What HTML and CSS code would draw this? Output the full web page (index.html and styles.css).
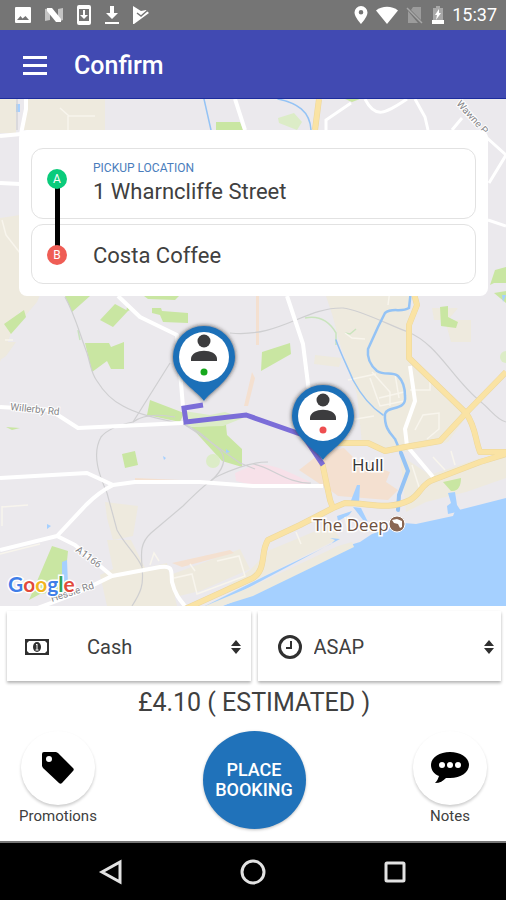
FILE: index.html
```html
<!DOCTYPE html>
<html lang="en">
<head>
<meta charset="utf-8">
<meta name="viewport" content="width=device-width, initial-scale=1">
<title>Confirm</title>
<link rel="stylesheet" href="styles.css">
</head>
<body>
<div class="status-bar">
  <div class="status-group status-notices">
    <svg width="18" height="18" viewBox="0 0 18 18"><path fill="#fff" fill-rule="evenodd" d="M2 1h14a1 1 0 0 1 1 1v14a1 1 0 0 1-1 1H2a1 1 0 0 1-1-1V2a1 1 0 0 1 1-1zm1 13h12l-3.500-4-3 2.500L6.500 10z"/></svg>
    <svg width="20" height="18" viewBox="0 0 20 18"><path fill="#c4c4c4" d="M1 3l5-1v12l-5 1zM14 3l5-1v12l-5 2z"/><path fill="#fff" d="M3 2h5l9 11v3h-5L3 5z"/></svg>
    <svg width="16" height="20" viewBox="0 0 16 20"><path fill="#fff" fill-rule="evenodd" d="M3 0h10a2 2 0 0 1 2 2v16a2 2 0 0 1-2 2H3a2 2 0 0 1-2-2V2a2 2 0 0 1 2-2zm0 4v12h10V4z"/><path fill="#fff" d="M7 5h2v5h3l-4 4-4-4h3z"/></svg>
    <svg width="16" height="20" viewBox="0 0 16 20"><path fill="#fff" d="M6 1h4v7h4l-6 6-6-6h4zM1 17h14v2H1z"/></svg>
    <svg width="18" height="18" viewBox="0 0 18 18"><path fill="#fff" d="M1 0l8 5 5-1 3 3L2 18H1z"/><path d="M5 7l4 3 7-6" fill="none" stroke="#757575" stroke-width="1.500"/></svg>
  </div>
  <div class="status-group status-system">
    <svg width="14" height="20" viewBox="0 0 14 20"><path fill="#fff" fill-rule="evenodd" d="M7 1a6.500 6.500 0 0 0-6.500 6.500C.5 12 7 19 7 19s6.500-7 6.500-11.500A6.500 6.500 0 0 0 7 1zm0 4a2.300 2.300 0 1 1 0 4.600A2.300 2.300 0 0 1 7 5z"/></svg>
    <svg width="22" height="18" viewBox="0 0 22 18"><path fill="#fff" d="M0 4.500C6-.5 16-.5 22 4.500L11 18z"/></svg>
    <svg width="18" height="18" viewBox="0 0 18 18"><path fill="#9c9c9c" d="M7 1h8v13L5 4zM2 5l10 12H2z"/><path d="M1 2l15 15" stroke="#a8a8a8" stroke-width="1.500"/></svg>
    <svg width="12" height="18" viewBox="0 0 12 18"><path fill="#a8a8a8" d="M4 0h4v2h3v12H1V2h3z"/><path fill="#fff" d="M0 14h12v4H0zM7 3L3 9h2l-1 5 5-7H7z"/></svg>
    <span class="clock">15:37</span>
  </div>
</div>

<header class="app-bar">
  <button class="menu-button" type="button" aria-label="Menu"><span></span><span></span><span></span></button>
  <h1>Confirm</h1>
</header>

<main>
  <section class="map">
    <svg class="map-canvas" viewBox="0 99 506 507" preserveAspectRatio="xMidYMid slice" role="img" aria-label="Route map of Hull">
      <defs>
        <filter id="pin-shadow" x="-30%" y="-30%" width="160%" height="160%"><feDropShadow dx="0" dy="0" stdDeviation="2" flood-color="#222" flood-opacity=".85"/></filter>
        <g id="pin">
          <path filter="url(#pin-shadow)" fill="#1b70b8" d="M0 44C-4 36-31 22-31 0a31 31 0 0 1 62 0C31 22 4 36 0 44z"/>
          <circle r="25" fill="#fff"/>
          <circle cy="-16" r="6.500" fill="#3c3c3e"/>
          <path fill="#3c3c3e" d="M-13 4V2c0-11 26-11 26 0v2z"/>
        </g>
      </defs>
      <rect y="99" width="506" height="507" fill="#ebe9ed"/>
      <g fill="#eeeade">
        <path d="M24 99h81v31H24zM0 99h16v34H0zM0 218l20-3v95L0 362zM20 290h22l-5 12-17 20zM0 342h16l-10 14-6 4z"/>
        <path d="M324 290h86l-2 70 34 28 26 26-20 28-42 10-44-8-5-50-17-50-8-30zM432 308h26l-10 12h-14zM445 320h26v22h-20z"/>
        <path d="M400 455l30 20 50-17h26v20l-40 14-40 10-20 10zM270 550l60-25 10 13-80 40-50 20 40-28zM105 502l33 4-5 30-20 4-6-22z"/>
        <path d="M107 540l24 0 14 28 22-5 10 43h-70l-7-31 13-6zM170 575l70-26 10 20-50 22-25 6zM315 355l27 3-3 9-25-3z"/>
      </g>
      <g fill="#f4e0d0">
        <path d="M172 563l58-13 4 3-52 14zM322 452l22-4 12 12 34 12-4 10 12 8-10 10-50-4-8-6-10-6-21-14zM135 478l45 2v4h-45z"/>
        <path d="M252 372l-8 34h4l7-28zM256 290h3v55h-3z"/>
      </g>
      <path fill="#f7e1e9" d="M235 473l18-8c16-4 38 8 57 17v5l-54-1-20-5z"/>
      <g fill="#c9e6a2">
        <path d="M216 122h24l4 10h-28zM4 324l20-14 2 7-15 17zM65 296h25l-18 16zM100 320l15-16 13 7-15 16zM127 307l3 3-4 2zM152 308h9l1 3 26 2v10l-25-1-3-7-8-2z"/>
        <path d="M85 343l24 0 2 4 13-5v27h-13l-4-8-15 11zM150 400l34 13-4 9-33-7zM191 427l35-2 1 10 15 14v18l-20-6zM122 454l13-3 3 14-13 3z"/>
        <path d="M52 546l16 5-4 40-24 3-11 6zM262 352l28-9 1 11-30 17zM440 307l8-1v11l10 5-2 6-15-2zM495 270l11-3v16h-12l-4 2zM494 293l12-2v12zM443 482l18-4c0 8-3 14-10 13z"/>
        <path d="M345 99h15l-8 3zM68 296h14l-2 4zM144 296h35l-4 4-27-1zM6 427l14 1-8 2z"/>
      </g>
      <g fill="#dcecc7"><circle cx="213" cy="461" r="7"/><path d="M278 118l16-5 8 9-5 8-18-7zM184 411l26 4 15-3 18 6-20 8-36 1z"/><circle cx="506" cy="357" r="6"/></g>
      <g fill="none" stroke="#c9e4bd" stroke-width="1.500"><path d="M305 318q20-4 31 15v12M345 333l5 1 6-5M78 330l2 10"/></g>

      <g fill="#a5d0ff">
        <path d="M506 498l-51 13-2 5-37 8-12-1-32 11-12 8-10 3-97 48-30 13h283z"/>
        <path d="M330 538l10 1-77 41-38 20-6 6h-14l60-30 48-23 18-9 4-4z"/>
        <path d="M448 493l7-1 2 13 4 6-13 3-1-8 4-3zM353 507l8 1 7 14-5-2zM337 516l15-5-3 4-11 6zM357 485h3l-1 18h-9zM62 562l5-2 1 24-6 1zM47 524l4 2-4 3zM163 456l3 2-2 2zM226 449l4 3-4 1zM16 104h4v8h-4zM502 295h4l-3 7z"/>
      </g>
      <path fill="#eeeade" d="M352 542l2 5-101 49-32 10h-16l48-20 85-40z"/>
      <g fill="none" stroke="#cfcfd1" stroke-width="1.200">
        <path d="M65 297c10 18 14 35 22 56 4 13 4 20 10 28 8 13 16 20 26 25 18 10 39 13 60 18 15 5 25 16 37 26 7 9 3 20-9 31"/>
        <path d="M170 363l-37 59c-15 3-27 9-32 15-10 18-1 40 6 56l10 37c8 15 20 25 25 37 2 18-1 25-10 39"/>
        <path d="M268 462c-16 0-35 7-50 14-10 5-25 20-35 30l-32 27c-11 10-10 20-9 33M133 422c8-6 20-9 42-5M185 425c20 12 40 28 55 38l15 6M253 464c20 4 35 20 58 19"/>
        <path d="M230 333c50 5 75-26 113-25 18 2 48 18 65 24 30 12 45 48 73 70 10 8 16 18 25 20M17 99v31"/>
      </g>
      <g fill="none" stroke="#f8f5ed" stroke-width="1.500">
        <path d="M60 108l9 8h26M68 116v14M5 340h8M2 506v20M2 507l26-2M0 554l40-10M2 220l4 15 14 18"/>
        <path d="M390 290l-2 15M345 333l7 5 13 1M348 380l28-6M370 378l10 28 24-5M372 372l18 20v14M395 374l4 24M350 420l24-4M379 398l25-6M410 390h20v-12M415 430l8-15 16-2v16l-12 10"/>
        <path d="M174 578l18-4 5 20 48-18-6-20-22 5M296 532l5 12M348 530l-3-13M420 490l-8-25M445 470l-12-13M455 465l-4-14M195 571l-5-7M150 565l4-12 5 8"/>
      </g>
      <g fill="none" stroke="#fff" stroke-width="4" stroke-linejoin="round">
        <path d="M118 296l22 21 37 18 6 72M0 407l50 3 28 18 105-5M0 478l87-5 26 12 22-3h65l53 4h70"/>
        <path d="M113 485c-10 5-18 11-27 20l-29 31-57 14M57 536l18 9 37 31 48-9c14-2 11 5 12 15 3 12 7 17 13 24M112 576l-37 18-40 15"/>
        <path d="M287 296l16 48 5 40 3 20M410 366l5 35-10 28 2 17 26 31M26 99v10l-5 25-21 2M0 183l20 1M235 99l10 31"/>
      </g>
      <g fill="none" stroke="#fff" stroke-width="3"><path d="M326 130v-10l25-17M365 99c10 20 20 15 42 0M415 99l10 18 3 13M452 130l10-12M486 137l20 18-17 28M488 220l18 6"/></g>
      <g fill="none" stroke="#94c3f5" stroke-linecap="round">
        <path stroke-width="1.500" d="M204 99l7 31M278 99c19 4 32 12 33 31M336 340c4 12 12 28 17 40 7 13 16 26 30 35"/>
        <path stroke-width="2.500" d="M411 290l-2 18c-8 5-17-1-24 5l-7 14-10 22c-1 8 2 16 9 22 8 5 15 0 21 5 5 5 7 13 7 20 2 16-18 9-20 18-1 14 6 20 10 25l6 14"/>
        <path stroke-width="4" d="M401 453l7 18-9 24-1 15"/>
      </g>
      <g fill="none" stroke-linejoin="round">
        <path stroke="#ecd79d" stroke-width="6" d="M319 99l-4 31M413 290l4 15-8 20v33l57 55c10 14 9 27 14 39h26M506 372l-40 41-26 28-35 6-20 4-17-8h-40M322 462l8 38 3 8 12-5c25 0 43 8 65-3 11-6 11-16 23-20l47-18 26-8M333 508l-33 17-32 15c-8 12-1 29-15 38l-68 31"/>
        <path stroke="#fae3a4" stroke-width="5" d="M319 99l-4 31M413 290l4 15-8 20v33l57 55c10 14 9 27 14 39h26M506 372l-40 41-26 28-35 6-20 4-17-8h-40M322 462l8 38 3 8 12-5c25 0 43 8 65-3 11-6 11-16 23-20l47-18 26-8M333 508l-33 17-32 15c-8 12-1 29-15 38l-68 31"/>
      </g>
      <path d="M203 405l-19 3 2 14 60-7 57 20 20 30" fill="none" stroke="#7b6dd8" stroke-width="5"/>

      <g class="road-label">
        <text transform="translate(10 410) rotate(6)">Willerby Rd</text>
        <text transform="translate(75 551) rotate(37)">A1166</text>
        <text transform="translate(52 602) rotate(-18)">Hessle Rd</text>
        <text transform="translate(456 104) rotate(48)">Wawne P</text>
      </g>
      <g class="place-label">
        <text x="352" y="471">Hull</text>
        <text class="landmark-label" x="313" y="531">The Deep</text>
      </g>
      <circle cx="397" cy="524" r="8" fill="#8a6753" stroke="#fff"/>
      <path fill="#fff" d="M392 520l5-1 5 2v6l-2 1-2-4-4-1z"/>
      <text class="map-logo" x="8" y="592"><tspan fill="#3f7ee8">G</tspan><tspan fill="#e24a3b">o</tspan><tspan fill="#f2b51d">o</tspan><tspan fill="#3f7ee8">g</tspan><tspan fill="#37a457">l</tspan><tspan fill="#e24a3b">e</tspan></text>
      <use href="#pin" x="204" y="357"/><circle cx="204" cy="372" r="3.500" fill="#16a81c"/>
      <use href="#pin" x="323" y="416"/><circle cx="323" cy="430" r="3.500" fill="#ee4e50"/>
    </svg>

    <form class="trip-card">
      <div class="trip-field">
        <label for="pickup">PICKUP LOCATION</label>
        <input id="pickup" type="text" value="1 Wharncliffe Street">
      </div>
      <div class="trip-field trip-destination">
        <input id="destination" type="text" value="Costa Coffee" aria-label="Destination">
      </div>
      <div class="trip-line"><span class="stop stop-a">A</span><span class="stop stop-b">B</span></div>
    </form>
  </section>

  <section class="booking">
    <div class="pickers">
      <label class="picker picker-payment">
        <svg width="24" height="16" viewBox="0 0 24 16"><path fill="none" stroke="#303030" stroke-width="2" d="M1 1h22v14H1z"/><path fill="#303030" d="M1 1h4L1 5zM23 1h-4l4 4zM1 15h4l-4-4zM23 15h-4l4-4z"/><ellipse cx="12" cy="8" rx="4" ry="5" fill="#303030"/><path d="M11 6l1-1v6M10.500 11h3" fill="none" stroke="#fff"/></svg>
        <select aria-label="Payment method"><option>Cash</option></select>
        <svg width="10" height="14" viewBox="0 0 10 14"><path fill="#303030" d="M5 0l5 6H0zM5 14l5-6H0z"/></svg>
      </label>
      <label class="picker">
        <svg width="24" height="24" viewBox="0 0 24 24"><circle cx="12" cy="12" r="10.500" fill="none" stroke="#303030" stroke-width="3"/><path d="M13 6v7H8" fill="none" stroke="#303030" stroke-width="2"/></svg>
        <select aria-label="Pickup time"><option>ASAP</option></select>
        <svg width="10" height="14" viewBox="0 0 10 14"><path fill="#303030" d="M5 0l5 6H0zM5 14l5-6H0z"/></svg>
      </label>
    </div>
    <p class="fare">£4.10 ( ESTIMATED )</p>
    <div class="actions">
      <button class="action" type="button">
        <span class="action-icon"><svg width="32" height="32" viewBox="0 0 32 32"><path fill="#000" fill-rule="evenodd" d="M2 0h12l2 1 15 15c1 1 1 2 0 3L20 31c-1 1-2 1-3 0L1 16l-1-2V2q0-2 2-2zm5 4a3 3 0 1 0 0 6 3 3 0 0 0 0-6z"/></svg></span>
        Promotions
      </button>
      <button class="place-button" type="button">PLACE<br>BOOKING</button>
      <button class="action" type="button">
        <span class="action-icon"><svg width="38" height="32" viewBox="0 0 38 32"><path fill="#000" d="M19 0C8 0 0 6 0 13c0 5 3 9 8 11-1 3-2 5-4 7 5 0 8-2 11-5h4c11 0 19-6 19-13S30 0 19 0z"/><g fill="#fff"><circle cx="11" cy="13" r="3"/><circle cx="19" cy="13" r="3"/><circle cx="27" cy="13" r="3"/></g></svg></span>
        Notes
      </button>
    </div>
  </section>
</main>

<nav class="system-nav">
  <button type="button" aria-label="Back"><svg width="26" height="26" viewBox="0 0 26 26"><path d="M22 3v20L4 13z"/></svg></button>
  <button type="button" aria-label="Home"><svg width="26" height="26" viewBox="0 0 26 26"><circle cx="13" cy="13" r="11"/></svg></button>
  <button type="button" aria-label="Recent apps"><svg width="26" height="26" viewBox="0 0 26 26"><rect x="4" y="4" width="18" height="18" rx="1"/></svg></button>
</nav>
</body>
</html>
```
FILE: styles.css
```css
* { box-sizing: border-box; }

body {
  margin: 0;
  min-height: 100vh;
  display: flex;
  flex-direction: column;
  background: #fff;
  color: #404040;
  font-family: Roboto, "Liberation Sans", sans-serif;
}

svg { display: block; flex: none; }
button, input, select { font: inherit; color: inherit; }
button { border: 0; padding: 0; background: none; cursor: pointer; }

.status-bar {
  height: 30px;
  padding: 0 9px 0 14px;
  display: flex;
  align-items: center;
  justify-content: space-between;
  background: #757575;
  color: #fff;
}
.status-group { display: flex; align-items: center; }
.status-notices { gap: 12px; }
.status-system { gap: 8px; }
.clock { font-size: 18px; line-height: 20px; }

.app-bar {
  height: 69px;
  padding: 3px 23px 0;
  display: flex;
  align-items: center;
  gap: 27px;
  background: #414ab2;
  border-bottom: 1px solid #1c2c9c;
  color: #fff;
}
.menu-button { width: 24px; display: grid; gap: 5px; }
.menu-button span { height: 3px; background: #fff; }
.app-bar h1 { margin: 0; font-size: 25px; line-height: 32px; font-weight: 500; }

main { flex: 1; display: flex; flex-direction: column; }

.map {
  flex: 1;
  min-height: 400px;
  padding: 31px 18px 0 19px;
  position: relative;
  overflow: hidden;
}
.map-canvas { position: absolute; inset: 0; width: 100%; height: 100%; }
.road-label { font-size: 10px; fill: #858588; stroke: #fff; stroke-width: 2px; paint-order: stroke; }
.place-label { font-family: "Open Sans", sans-serif; font-size: 17px; fill: #333; stroke: #fff; stroke-width: 3px; paint-order: stroke; }
.landmark-label { fill: #6e5140; }
.map-logo { font-family: Lato, sans-serif; font-size: 21px; font-weight: 700; stroke: #fff; stroke-width: 3px; paint-order: stroke; }

.trip-card {
  position: relative;
  padding: 18px 12px 12px;
  display: grid;
  gap: 5px;
  background: #fff;
  border-radius: 8px;
}
.trip-field {
  height: 71px;
  padding: 2px 16px 0 61px;
  display: flex;
  flex-direction: column;
  justify-content: center;
  gap: 2px;
  border: 1px solid #e2e2e2;
  border-radius: 12px;
}
.trip-destination { height: 60px; }
.trip-field label { font-size: 12px; line-height: 12px; color: #4a7dbc; }
.trip-field input {
  width: 100%;
  height: 32px;
  padding: 0;
  border: 0;
  background: none;
  outline: 0;
  font-size: 22px;
}
.trip-line {
  position: absolute;
  left: 28px;
  top: 39px;
  bottom: 31px;
  width: 20px;
  display: flex;
  flex-direction: column;
  justify-content: space-between;
  background: linear-gradient(#000, #000) center / 5px 80% no-repeat;
}
.stop {
  height: 20px;
  border-radius: 50%;
  color: #fff;
  font-size: 12px;
  line-height: 20px;
  text-align: center;
}
.stop-a { background: #0acb7b; }
.stop-b { background: #ef5d55; }

.booking { padding: 5px 5px 12px 7px; }
.pickers { display: grid; grid-template-columns: 1fr 1fr; gap: 7px; }
.picker {
  height: 70px;
  padding: 2px 7px 0 18px;
  display: flex;
  align-items: center;
  gap: 12px;
  background: #fff;
  box-shadow: 0 2px 3px rgba(0, 0, 0, .3);
}
.picker:last-child { padding-left: 20px; }
.picker-payment { gap: 38px; padding-right: 10px; }
.picker select {
  flex: 1;
  min-width: 0;
  height: 40px;
  padding: 0;
  border: 0;
  appearance: none;
  background: none;
  font-size: 20px;
}
.fare { margin: 5px 0 12px; text-align: center; font-size: 25px; line-height: 33px; }

.actions {
  padding: 0 12px;
  display: grid;
  grid-template-columns: 1fr auto 1fr;
  align-items: start;
}
.action {
  justify-self: start;
  min-width: 78px;
  display: grid;
  justify-items: center;
  gap: 2px;
  font-size: 15px;
  line-height: 18px;
}
.action:last-child { justify-self: end; }
.action-icon {
  width: 74px;
  height: 74px;
  display: grid;
  place-items: center;
  border-radius: 50%;
  box-shadow: 0 2px 3px rgba(0, 0, 0, .2);
}
.place-button {
  width: 103px;
  height: 98px;
  border-radius: 50%;
  background: #2072ba;
  box-shadow: 0 1px 3px rgba(0, 0, 0, .25);
  color: #fff;
  font-size: 18px;
  line-height: 20px;
  font-weight: 500;
}

.system-nav {
  height: 59px;
  padding: 0 40px;
  display: grid;
  grid-template-columns: repeat(3, 1fr);
  place-items: center;
  background: #000;
  border-top: 2px solid #777;
}
.system-nav svg { fill: none; stroke: #e2e2e2; stroke-width: 3; }
```
